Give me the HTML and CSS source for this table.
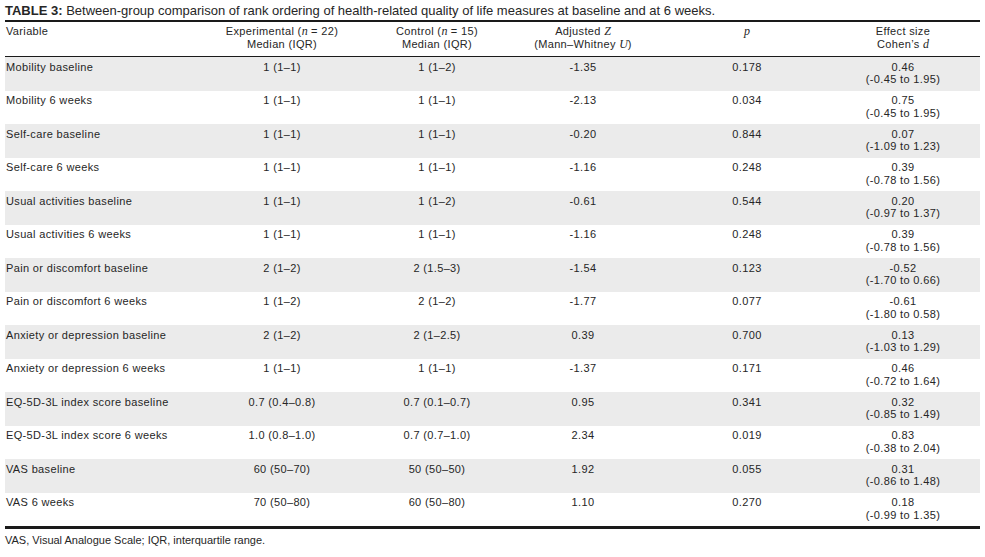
FILE: index.html
```html
<!DOCTYPE html>
<html lang="en">
<head>
<meta charset="utf-8">
<title>Table 3</title>
<link rel="stylesheet" href="styles.css">
</head>
<body>
<div class="page">
  <p class="caption"><b>TABLE 3:</b> Between-group comparison of rank ordering of health-related quality of life measures at baseline and at 6 weeks.</p>
  <div class="table">
    <div class="row head">
      <div class="c var">Variable</div>
      <div class="c">Experimental (<i class="m">n</i> = 22)<br>Median (IQR)</div>
      <div class="c">Control (<i class="m">n</i> = 15)<br>Median (IQR)</div>
      <div class="c">Adjusted <i class="m">Z</i><br>(Mann–Whitney <i class="m">U</i>)</div>
      <div class="c"><i class="m">p</i></div>
      <div class="c">Effect size<br>Cohen’s <i class="m">d</i></div>
    </div>
    <div class="row shade"><div class="c var">Mobility baseline</div><div class="c">1 (1–1)</div><div class="c">1 (1–2)</div><div class="c">-1.35</div><div class="c">0.178</div><div class="c">0.46<br>(-0.45 to 1.95)</div></div>
    <div class="row"><div class="c var">Mobility 6 weeks</div><div class="c">1 (1–1)</div><div class="c">1 (1–1)</div><div class="c">-2.13</div><div class="c">0.034</div><div class="c">0.75<br>(-0.45 to 1.95)</div></div>
    <div class="row shade"><div class="c var">Self-care baseline</div><div class="c">1 (1–1)</div><div class="c">1 (1–1)</div><div class="c">-0.20</div><div class="c">0.844</div><div class="c">0.07<br>(-1.09 to 1.23)</div></div>
    <div class="row"><div class="c var">Self-care 6 weeks</div><div class="c">1 (1–1)</div><div class="c">1 (1–1)</div><div class="c">-1.16</div><div class="c">0.248</div><div class="c">0.39<br>(-0.78 to 1.56)</div></div>
    <div class="row shade"><div class="c var">Usual activities baseline</div><div class="c">1 (1–1)</div><div class="c">1 (1–2)</div><div class="c">-0.61</div><div class="c">0.544</div><div class="c">0.20<br>(-0.97 to 1.37)</div></div>
    <div class="row"><div class="c var">Usual activities 6 weeks</div><div class="c">1 (1–1)</div><div class="c">1 (1–1)</div><div class="c">-1.16</div><div class="c">0.248</div><div class="c">0.39<br>(-0.78 to 1.56)</div></div>
    <div class="row shade"><div class="c var">Pain or discomfort baseline</div><div class="c">2 (1–2)</div><div class="c">2 (1.5–3)</div><div class="c">-1.54</div><div class="c">0.123</div><div class="c">-0.52<br>(-1.70 to 0.66)</div></div>
    <div class="row"><div class="c var">Pain or discomfort 6 weeks</div><div class="c">1 (1–2)</div><div class="c">2 (1–2)</div><div class="c">-1.77</div><div class="c">0.077</div><div class="c">-0.61<br>(-1.80 to 0.58)</div></div>
    <div class="row shade"><div class="c var">Anxiety or depression baseline</div><div class="c">2 (1–2)</div><div class="c">2 (1–2.5)</div><div class="c">0.39</div><div class="c">0.700</div><div class="c">0.13<br>(-1.03 to 1.29)</div></div>
    <div class="row"><div class="c var">Anxiety or depression 6 weeks</div><div class="c">1 (1–1)</div><div class="c">1 (1–1)</div><div class="c">-1.37</div><div class="c">0.171</div><div class="c">0.46<br>(-0.72 to 1.64)</div></div>
    <div class="row shade"><div class="c var">EQ-5D-3L index score baseline</div><div class="c">0.7 (0.4–0.8)</div><div class="c">0.7 (0.1–0.7)</div><div class="c">0.95</div><div class="c">0.341</div><div class="c">0.32<br>(-0.85 to 1.49)</div></div>
    <div class="row"><div class="c var">EQ-5D-3L index score 6 weeks</div><div class="c">1.0 (0.8–1.0)</div><div class="c">0.7 (0.7–1.0)</div><div class="c">2.34</div><div class="c">0.019</div><div class="c">0.83<br>(-0.38 to 2.04)</div></div>
    <div class="row shade"><div class="c var">VAS baseline</div><div class="c">60 (50–70)</div><div class="c">50 (50–50)</div><div class="c">1.92</div><div class="c">0.055</div><div class="c">0.31<br>(-0.86 to 1.48)</div></div>
    <div class="row"><div class="c var">VAS 6 weeks</div><div class="c">70 (50–80)</div><div class="c">60 (50–80)</div><div class="c">1.10</div><div class="c">0.270</div><div class="c">0.18<br>(-0.99 to 1.35)</div></div>
  </div>
  <p class="note">VAS, Visual Analogue Scale; IQR, interquartile range.</p>
</div>
</body>
</html>
```

FILE: styles.css
```css
html, body {
  margin: 0;
  padding: 0;
  background: #ffffff;
}
body {
  font-family: "Liberation Sans", Arial, sans-serif;
  color: #262626;
}
.page {
  padding: 4px 5px 0 5px;
  width: 975px;
}
.caption {
  margin: 0;
  font-size: 13px;
  line-height: 14px;
  height: 16px;
  white-space: nowrap;
}
.caption b {
  font-weight: bold;
}
.table {
  border-top: 2.5px solid #1a1a1a;
  border-bottom: 3px solid #1a1a1a;
}
.row {
  display: grid;
  grid-template-columns: 183px 188px 122px 170px 158px 154px;
  font-size: 11px;
  letter-spacing: 0.35px;
  line-height: 12.7px;
  height: 33.5px;
  box-sizing: border-box;
  padding-top: 3.6px;
}
.row.shade {
  background: #ebebeb;
}
.row.head {
  height: 35px;
  padding-top: 2.5px;
  line-height: 13.4px;
  border-bottom: 1.2px solid #1a1a1a;
}
.c {
  text-align: center;
}
.c.var {
  text-align: left;
  padding-left: 1px;
}
.m {
  font-family: "Liberation Serif", "Times New Roman", serif;
  font-style: italic;
  font-size: 12px;
  letter-spacing: 0;
}
.note {
  margin: 0;
  padding-top: 4px;
  font-size: 11px;
  line-height: 14px;
}
```
